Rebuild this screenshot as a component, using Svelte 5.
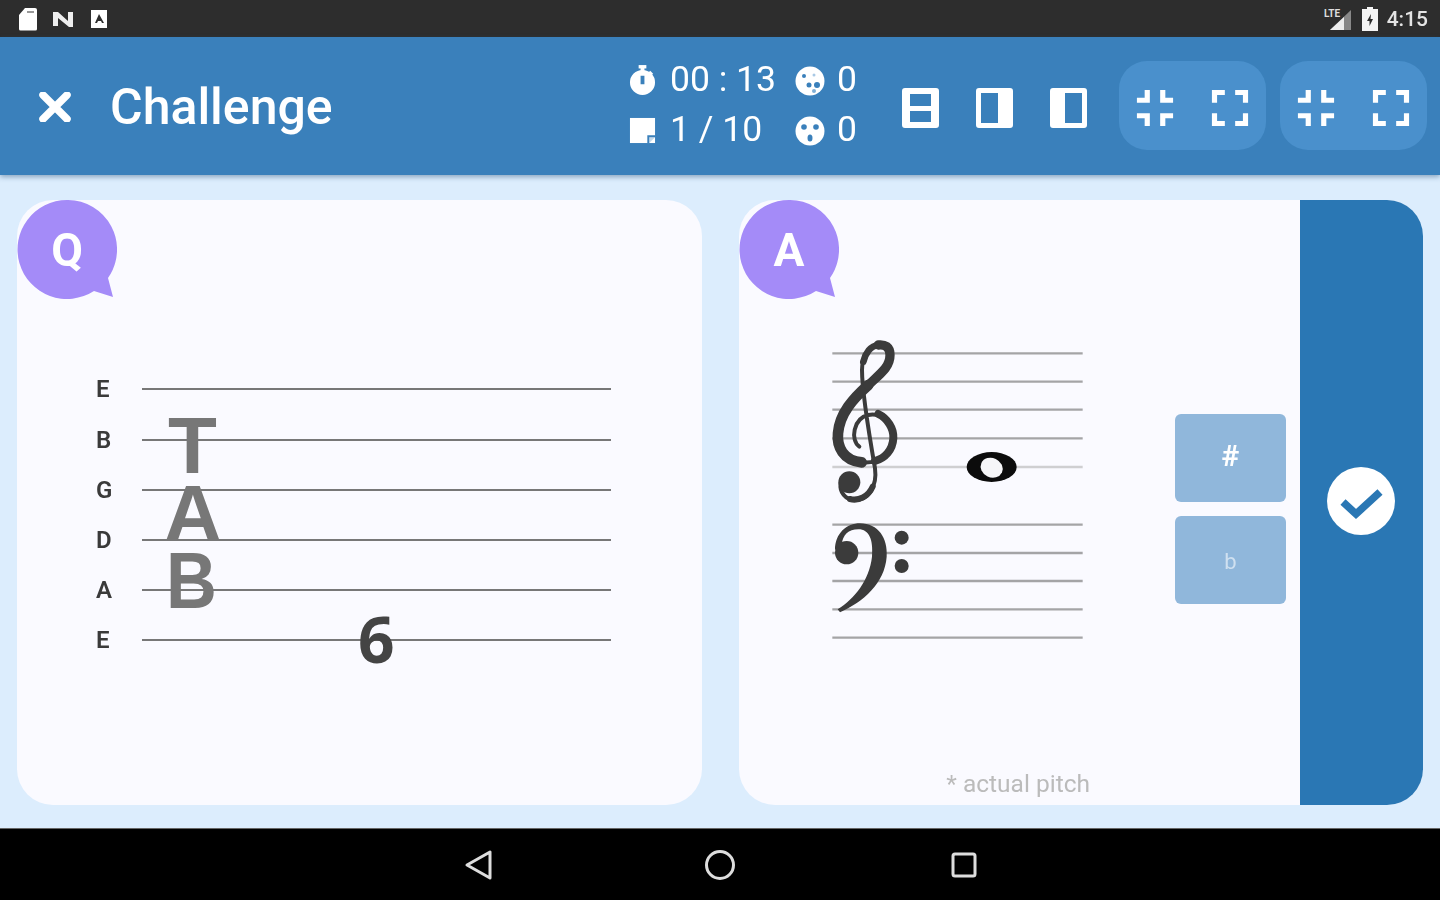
<script>
  const tabRows = ['E', 'B', 'G', 'D', 'A', 'E'];
  const staffLines = [70, 155, 239, 325, 411, 584, 669, 753, 838, 923];
</script>

<div class="screen">
  <div class="status">
    <div class="status-left">
      <svg class="st-sd" viewBox="0 0 20 24"><path d="M7 1h10a2 2 0 0 1 2 2v19a1.500 1.500 0 0 1-1.500 1.500h-15A1.500 1.500 0 0 1 1 22V8z" fill="#fff"/><rect x="9" y="4" width="7" height="2" fill="#999"/></svg>
      <svg class="st-n" viewBox="0 0 22 18"><path d="M1 2h5l10 9V2h5v15h-4L6 8v8H1z" fill="#eee"/></svg>
      <svg class="st-a" viewBox="0 0 18 20"><path fill-rule="evenodd" d="M1 1h16v18H1zM9 5 5 14h2l1-2h3l1 2h2z" fill="#fff"/></svg>
    </div>
    <div class="status-right">
      <svg class="st-sig" viewBox="0 0 28 24"><path d="M27 3v20H6z" fill="#888"/><path d="M20 10v13H6z" fill="#eee"/><text x="0" y="10" class="lte">LTE</text></svg>
      <svg class="st-bat" viewBox="0 0 16 24"><path fill-rule="evenodd" d="M5 0h6v2h5v22H0V2h5zM9 7 5 14h2.500v5L11 12H8.500z" fill="#f4f4f4"/></svg>
      <span class="clock">4:15</span>
    </div>
  </div>

  <header class="bar">
    <svg class="close" viewBox="0 0 34 30"><path d="M5 3l24 24M29 3 5 27" stroke="#fff" stroke-width="7.500" stroke-linecap="round"/></svg>
    <h1>Challenge</h1>
    <div class="stats">
      <svg class="stat-icon" viewBox="0 0 28 32"><rect x="10" y="0" width="8" height="3.500" fill="#fff"/><rect x="12" y="2" width="4" height="5" fill="#fff"/><path d="M22 6l3 3-2 2-3-3z" fill="#fff"/><path fill-rule="evenodd" d="M14 5a13 13 0 1 1 0 26 13 13 0 0 1 0-26zM12 11v9h4v-9z" fill="#fff"/></svg>
      <span class="stat-text wide">00 : 13</span>
      <svg class="stat-icon face" viewBox="0 0 30 30"><circle cx="15" cy="15" r="14.500" fill="#fff"/><circle cx="9" cy="10" r="2" fill="#3a80bb"/><circle cx="19" cy="9" r="1.500" fill="#a9c9e5"/><circle cx="14" cy="19" r="2.500" fill="#3a80bb"/><circle cx="22" cy="19" r="3" fill="#3a80bb"/><circle cx="19" cy="25" r="2" fill="#7fafd6"/></svg>
      <span class="stat-text">0</span>
      <svg class="stat-icon" viewBox="0 0 28 28"><rect x="1" y="1" width="26" height="26" fill="#fff"/><path d="M19 27v-8h8v2h-6v6z" fill="#3a80bb"/><path d="M21 27v-6h6z" fill="#3a80bb" opacity="0.3"/></svg>
      <span class="stat-text wide">1 / 10</span>
      <svg class="stat-icon face" viewBox="0 0 30 30"><circle cx="15" cy="15" r="14.500" fill="#fff"/><circle cx="9" cy="11" r="2.800" fill="#3a80bb"/><circle cx="21" cy="11" r="2.800" fill="#3a80bb"/><ellipse cx="15" cy="22" rx="2.500" ry="3.500" fill="#3a80bb"/></svg>
      <span class="stat-text">0</span>
    </div>
    <div class="layouts">
      <svg viewBox="0 0 37 40"><path fill-rule="evenodd" d="M3 0h31a3 3 0 0 1 3 3v34a3 3 0 0 1-3 3H3a3 3 0 0 1-3-3V3a3 3 0 0 1 3-3zM8 6v12h21V6zM8 23v11h21V23z" fill="#fff"/></svg>
      <svg viewBox="0 0 37 40"><path fill-rule="evenodd" d="M3 0h31a3 3 0 0 1 3 3v34a3 3 0 0 1-3 3H3a3 3 0 0 1-3-3V3a3 3 0 0 1 3-3zM5 5v30h17V5z" fill="#fff"/></svg>
      <svg viewBox="0 0 37 40"><path fill-rule="evenodd" d="M3 0h31a3 3 0 0 1 3 3v34a3 3 0 0 1-3 3H3a3 3 0 0 1-3-3V3a3 3 0 0 1 3-3zM15 5v30h17V5z" fill="#fff"/></svg>
    </div>
    <div class="zoom-group first">
      <svg viewBox="0 0 24 24"><path d="M5 16h3v3h2v-5H5v2zm3-8H5v2h5V5H8v3zm6 11h2v-3h3v-2h-5v5zm2-11V5h-2v5h5V8h-3z" fill="#fff"/></svg>
      <svg viewBox="0 0 24 24"><path d="M7 14H5v5h5v-2H7v-3zm-2-4h2V7h3V5H5v5zm12 7h-3v2h5v-5h-2v3zM14 5v2h3v3h2V5h-5z" fill="#fff"/></svg>
    </div>
    <div class="zoom-group">
      <svg viewBox="0 0 24 24"><path d="M5 16h3v3h2v-5H5v2zm3-8H5v2h5V5H8v3zm6 11h2v-3h3v-2h-5v5zm2-11V5h-2v5h5V8h-3z" fill="#fff"/></svg>
      <svg viewBox="0 0 24 24"><path d="M7 14H5v5h5v-2H7v-3zm-2-4h2V7h3V5H5v5zm12 7h-3v2h5v-5h-2v3zM14 5v2h3v3h2V5h-5z" fill="#fff"/></svg>
    </div>
  </header>

  <main class="content">
    <section class="card question">
      <div class="badge">
        <svg viewBox="0 0 100 100"><path d="M50 0a49.500 49.500 0 0 1 41 78l5 19-19-6A49.500 49.500 0 1 1 50 0z" fill="#a48bf8"/></svg>
        <span>Q</span>
      </div>
      <div class="tab">
        {#each tabRows as name}
          <div class="tab-row"><span class="string">{name}</span><span class="string-line"></span></div>
        {/each}
        <span class="clef-letter t">T</span>
        <span class="clef-letter a">A</span>
        <span class="clef-letter b">B</span>
        <span class="fret">6</span>
      </div>
    </section>

    <section class="card answer">
      <div class="badge">
        <svg viewBox="0 0 100 100"><path d="M50 0a49.500 49.500 0 0 1 41 78l5 19-19-6A49.500 49.500 0 1 1 50 0z" fill="#a48bf8"/></svg>
        <span>A</span>
      </div>
      <div class="answer-main">
        <div class="answer-top">
          <svg class="notation" viewBox="0 0 900 960">
            {#each staffLines as y, i}
              <line x1="97" x2="848" y1={y} y2={y} stroke={i === 4 ? '#cfcfd1' : '#a4a4a6'} stroke-width="7"/>
            {/each}
            <g fill="none" stroke="#3b3b3b" stroke-linecap="round">
              <path stroke-width="12" d="M178 350C150 330 160 265 205 255C250 247 282 285 280 325C277 375 235 402 185 397C130 392 110 350 114 310C119 250 160 205 205 165C245 128 270 110 270 75C270 50 255 43 235 45C205 48 186 85 186 120C186 180 205 300 225 415C232 470 205 510 165 510C135 510 118 485 122 460"/>
              <path stroke-width="32" d="M185 397C130 392 110 350 114 310C119 250 160 205 205 165"/>
              <path stroke-width="28" d="M205 165C245 128 270 110 270 75C270 50 255 43 235 45"/>
              <path stroke-width="24" d="M235 252C262 265 282 295 280 325C278 360 255 385 225 393"/>
              <path stroke-width="20" d="M235 45C212 47 196 70 190 95"/>
              <path stroke-width="18" d="M150 507C175 514 205 500 218 470"/>
            </g>
            <circle cx="148" cy="457" r="33" fill="#3b3b3b"/>
            <circle cx="140" cy="668" r="35" fill="#3b3b3b"/>
            <path d="M105 660C105 610 140 580 180 580C235 580 264 625 260 680C254 760 190 815 120 847L113 838C165 805 208 750 216 680C220 630 208 598 175 598C145 598 128 615 125 645Z" fill="#3b3b3b"/>
            <circle cx="305" cy="623" r="21" fill="#3b3b3b"/>
            <circle cx="305" cy="708" r="21" fill="#3b3b3b"/>
            <ellipse cx="575" cy="411" rx="75" ry="45" fill="#0c0c0c"/>
            <ellipse cx="575" cy="413" rx="34" ry="29" transform="rotate(25 575 413)" fill="#f6f6f8"/>
          </svg>
          <div class="accidentals">
            <button class="sharp">#</button>
            <button class="flat">b</button>
          </div>
        </div>
        <p class="note">* actual pitch</p>
      </div>
      <div class="confirm">
        <svg viewBox="0 0 68 68"><circle cx="34" cy="34" r="34" fill="#fff"/><path d="M16 35l13 12 24-22" fill="none" stroke="#2a77b4" stroke-width="7.500"/></svg>
      </div>
    </section>
  </main>

  <nav class="navbar">
    <svg viewBox="0 0 30 32"><path d="M27 3v26L4 16z" fill="none" stroke="#ddd" stroke-width="3" stroke-linejoin="round"/></svg>
    <svg viewBox="0 0 30 32"><circle cx="15" cy="16" r="13.500" fill="none" stroke="#ddd" stroke-width="3"/></svg>
    <svg viewBox="0 0 30 32"><rect x="6" y="5" width="22" height="22" rx="2" fill="none" stroke="#ddd" stroke-width="3"/></svg>
  </nav>
</div>

<style>
  :global(body) { margin: 0; background: #000; }
  .screen {
    width: 1440px; height: 900px; overflow: hidden;
    display: flex; flex-direction: column;
    font-family: Roboto, "Liberation Sans", sans-serif;
    filter: blur(0.7px);
  }
  svg { display: block; flex: none; }

  .status {
    height: 37px; background: #2d2d2d; flex: none;
    display: flex; align-items: center; justify-content: space-between;
    padding: 0 12px 0 18px; box-sizing: border-box;
  }
  .status-left, .status-right { display: flex; align-items: center; }
  .st-sd { width: 20px; height: 24px; }
  .st-n { width: 22px; height: 18px; margin-left: 14px; }
  .st-a { width: 18px; height: 20px; margin-left: 16px; }
  .st-sig { width: 28px; height: 24px; }
  .lte { font: 700 10px Roboto, sans-serif; fill: #ddd; }
  .st-bat { width: 16px; height: 24px; margin-left: 10px; }
  .clock { margin-left: 9px; color: #e4e4e4; font-size: 21px; font-weight: 500; line-height: 24px; }

  .bar {
    height: 138px; flex: none; background: #3a80bb; box-sizing: border-box;
    display: flex; align-items: center; padding: 0 13px 0 38px;
    box-shadow: 0 2px 5px rgba(40, 80, 120, 0.45); position: relative; z-index: 1;
  }
  .close { width: 34px; height: 30px; margin-top: 2px; }
  h1 { margin: 2px 0 0 38px; color: #fff; font-size: 50px; font-weight: 500; flex: 1; line-height: 56px; }

  .stats {
    display: grid; grid-template-columns: 41px 125px 42px 20px;
    grid-auto-rows: 50px; align-items: center; margin-top: -1px;
    color: #fff;
  }
  .stat-icon { width: 27px; height: 31px; }
  .stat-icon.face { width: 30px; height: 30px; }
  .stat-text { font-size: 35.500px; line-height: 40px; margin-bottom: 4px; }
  .layouts { display: flex; gap: 37px; margin-left: 45px; margin-top: 3px; }
  .layouts svg { width: 37px; height: 40px; }
  .zoom-group {
    display: flex; justify-content: center; gap: 13px;
    width: 147px; height: 89px; align-items: center; margin: -1px 0 0 14px;
    background: #4a90cc; border-radius: 28px;
  }
  .zoom-group.first { margin-left: 32px; }
  .zoom-group svg { width: 62px; height: 62px; margin-top: 4px; }

  .content {
    flex: 1; background: #dcedfd; display: flex; gap: 37px;
    padding: 25px 17px 23px;
  }
  .card { position: relative; background: #fafaff; border-radius: 36px; overflow: hidden; }
  .question { width: 685px; overflow: visible; }
  .answer { width: 684px; display: flex; overflow: visible; }
  .badge {
    position: absolute; left: 0; top: 0; width: 100px; height: 100px;
    display: flex; align-items: center; justify-content: center;
    color: #fff; font-size: 46px; font-weight: 700;
  }
  .badge svg { position: absolute; inset: 0; width: 100%; height: 100%; }
  .badge span { position: relative; }

  .tab { position: relative; width: 515px; margin: 164.400px 0 0 79px; }
  .tab-row { height: 50.200px; display: flex; align-items: center; }
  .string { width: 46px; color: #3a3a3a; font-size: 24px; font-weight: 600; line-height: 30px; }
  .string-line { flex: 1; height: 2px; background: #777; }
  .clef-letter {
    position: absolute; font: 700 80px/80px "Liberation Sans", Arial, sans-serif; color: #777;
  }
  .t { left: 72px; top: 42px; }
  .a { left: 68px; top: 110px; }
  .b { left: 70px; top: 177px; transform: scaleX(0.88); transform-origin: left center; }
  .fret {
    position: absolute; left: 262px; top: 237px;
    font: 700 64px/76px "Open Sans", sans-serif; color: #444;
  }

  .answer-main { flex: 1; display: flex; flex-direction: column; }
  .answer-top { display: flex; padding: 130px 0 0 61px; }
  .notation { width: 300px; height: 320px; }
  .accidentals { display: flex; flex-direction: column; gap: 14.500px; margin: 84px 0 0 75px; }
  .accidentals button {
    width: 111px; height: 87.500px; border: 0; padding: 0; border-radius: 6px;
    background: #90b7db; color: #fff; font-family: Roboto, sans-serif;
  }
  .sharp { font-size: 30px; font-weight: 700; padding-bottom: 5px !important; }
  .flat { font-size: 22px; color: #cfe0f0 !important; padding-top: 4px !important; }
  .note {
    margin: auto 0 5px; padding-right: 210px; text-align: right;
    color: #bbb; font-size: 24.500px; line-height: 32px;
  }
  .confirm {
    width: 123px; flex: none; background: #2a77b4; border-radius: 0 36px 36px 0;
    display: flex; align-items: center; justify-content: center;
  }
  .confirm svg { width: 68px; height: 68px; margin: -3px 2px 0 0; }

  .navbar {
    height: 72px; flex: none; background: #000; box-sizing: border-box;
    border-top: 1px solid #666;
    display: flex; align-items: center; justify-content: center; gap: 212px;
  }
  .navbar svg { width: 30px; height: 32px; }
</style>
